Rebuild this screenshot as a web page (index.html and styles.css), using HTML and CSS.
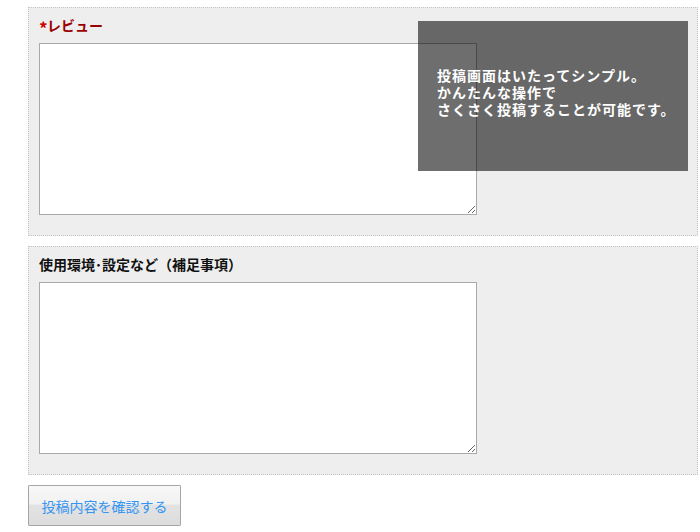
FILE: index.html
```html
<!DOCTYPE html>
<html lang="ja">
<head>
<meta charset="utf-8">
<link rel="stylesheet" href="styles.css">
</head>
<body>
<div class="page">
  <div class="panel">
    <div class="label required"><span class="mark">*</span>レビュー</div>
    <textarea class="field"></textarea>
  </div>
  <div class="panel">
    <div class="label">使用環境･設定など（補足事項）</div>
    <textarea class="field"></textarea>
  </div>
  <button class="submit">投稿内容を確認する</button>
  <div class="tip">投稿画面はいたってシンプル。<br>かんたんな操作で<br>さくさく投稿することが可能です。</div>
</div>
</body>
</html>
```
FILE: styles.css
```css
html, body {
  margin: 0;
  padding: 0;
  background: #fff;
  font-family: "Noto Sans CJK JP", "Liberation Sans", sans-serif;
}
.page {
  position: relative;
  width: 700px;
  height: 532px;
  padding: 7px 0 0 28px;
  box-sizing: border-box;
  overflow: hidden;
}
.panel {
  width: 670px;
  box-sizing: border-box;
  background: #eee;
  border: 1px dotted #c4c4c4;
  padding: 9px 10px 20px 10px;
  margin-bottom: 10px;
  display: flex;
  flex-direction: column;
  align-items: flex-start;
}
.label {
  font-size: 14px;
  font-weight: bold;
  line-height: 17px;
  height: 17px;
  color: #111;
  margin-bottom: 9px;
}
.required {
  color: #900;
}
.mark {
  display: inline-block;
  width: 8px;
  color: #c00;
  font-size: 17px;
  font-weight: bold;
  line-height: 17px;
  vertical-align: top;
  margin-top: 2px;
}
.field {
  display: block;
  width: 438px;
  height: 172px;
  box-sizing: border-box;
  border: 1px solid #a9a9a9;
  background: #fff;
  margin: 0;
  padding: 2px;
  resize: both;
}
.submit {
  display: block;
  width: 153px;
  height: 41px;
  margin: 0;
  padding: 0;
  border: 1px solid #a6a6a6;
  border-radius: 1px;
  background: linear-gradient(#f8f8f8 0%, #f1f1f1 45%, #e3e3e3 50%, #dcdcdc 100%);
  color: #3595f2;
  font-family: "Noto Sans CJK JP", "Liberation Sans", sans-serif;
  font-size: 14px;
}
.tip {
  position: absolute;
  left: 418px;
  top: 21px;
  width: 270px;
  height: 150px;
  box-sizing: border-box;
  padding: 46px 0 0 19px;
  background: rgba(0, 0, 0, 0.57);
  color: #fff;
  font-size: 14px;
  letter-spacing: 1px;
  font-weight: bold;
  line-height: 17px;
}
```
